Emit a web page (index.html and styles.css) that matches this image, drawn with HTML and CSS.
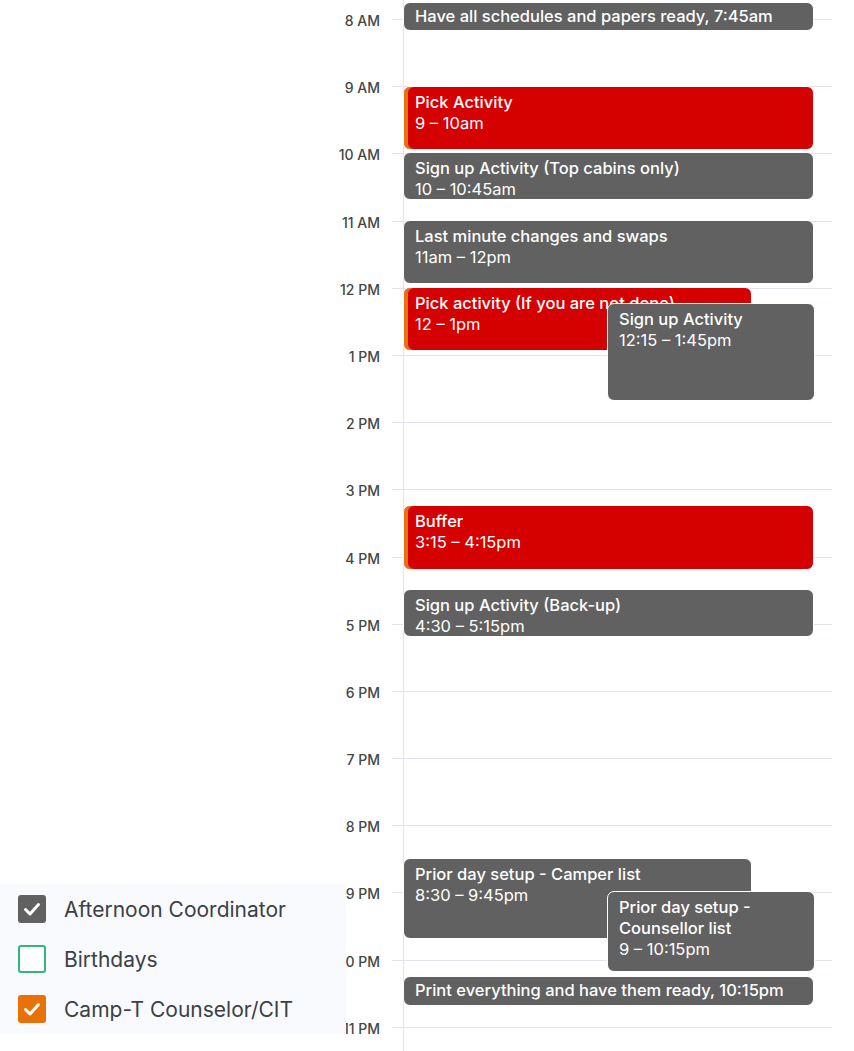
FILE: index.html
```html
<!DOCTYPE html>
<html>
<head>
<meta charset="utf-8">
<link rel="stylesheet" href="styles.css">
</head>
<body>
<div class="calendar">
  <div class="gutter">
    <div class="lead"></div>
    <div class="label"><span>8 AM</span></div>
    <div class="label"><span>9 AM</span></div>
    <div class="label"><span>10 AM</span></div>
    <div class="label"><span>11 AM</span></div>
    <div class="label"><span>12 PM</span></div>
    <div class="label"><span>1 PM</span></div>
    <div class="label"><span>2 PM</span></div>
    <div class="label"><span>3 PM</span></div>
    <div class="label"><span>4 PM</span></div>
    <div class="label"><span>5 PM</span></div>
    <div class="label"><span>6 PM</span></div>
    <div class="label"><span>7 PM</span></div>
    <div class="label"><span>8 PM</span></div>
    <div class="label"><span>9 PM</span></div>
    <div class="label"><span>10 PM</span></div>
    <div class="label"><span>11 PM</span></div>
  </div>
  <div class="grid">
    <div class="lead"></div>
    <div class="row"></div><div class="row"></div><div class="row"></div><div class="row"></div>
    <div class="row"></div><div class="row"></div><div class="row"></div><div class="row"></div>
    <div class="row"></div><div class="row"></div><div class="row"></div><div class="row"></div>
    <div class="row"></div><div class="row"></div><div class="row"></div><div class="row"></div>
    <div class="events">
      <div class="event gray short full" style="top:2px;height:29px"><span class="title">Have all schedules and papers ready, 7:45am</span></div>
      <div class="event red full" style="top:86px;height:64px"><div class="title">Pick Activity</div><div class="time">9 – 10am</div></div>
      <div class="event gray full" style="top:152px;height:48px"><div class="title">Sign up Activity (Top cabins only)</div><div class="time">10 – 10:45am</div></div>
      <div class="event gray full" style="top:220px;height:64px"><div class="title">Last minute changes and swaps</div><div class="time">11am – 12pm</div></div>
      <div class="event red left" style="top:287px;height:64px"><div class="title">Pick activity (If you are not done)</div><div class="time">12 – 1pm</div></div>
      <div class="event gray right" style="top:303px;height:98px"><div class="title">Sign up Activity</div><div class="time">12:15 – 1:45pm</div></div>
      <div class="event red full" style="top:505px;height:65px"><div class="title">Buffer</div><div class="time">3:15 – 4:15pm</div></div>
      <div class="event gray full" style="top:589px;height:48px"><div class="title">Sign up Activity (Back-up)</div><div class="time">4:30 – 5:15pm</div></div>
      <div class="event gray left" style="top:858px;height:81px"><div class="title">Prior day setup - Camper list</div><div class="time">8:30 – 9:45pm</div></div>
      <div class="event gray right" style="top:891px;height:81px"><div class="title">Prior day setup - Counsellor list</div><div class="time">9 – 10:15pm</div></div>
      <div class="event gray short full" style="top:976px;height:30px"><span class="title">Print everything and have them ready, 10:15pm</span></div>
    </div>
  </div>
</div>

<div class="calendars">
  <div class="cal">
    <span class="box box-gray"><svg viewBox="0 0 28 28" width="28" height="28"><path d="M7.5 14.5 L12 19 L20.5 9.5" fill="none" stroke="#fff" stroke-width="3" stroke-linecap="round" stroke-linejoin="round"/></svg></span>
    <span class="name">Afternoon Coordinator</span>
  </div>
  <div class="cal">
    <span class="box box-green"></span>
    <span class="name">Birthdays</span>
  </div>
  <div class="cal">
    <span class="box box-orange"><svg viewBox="0 0 28 28" width="28" height="28"><path d="M7.5 14.5 L12 19 L20.5 9.5" fill="none" stroke="#fff" stroke-width="3" stroke-linecap="round" stroke-linejoin="round"/></svg></span>
    <span class="name">Camp-T Counselor/CIT</span>
  </div>
</div>
</body>
</html>
```

FILE: styles.css
```css
html, body {
  margin: 0;
  padding: 0;
  background: #ffffff;
  overflow: hidden;
  height: 1051px;
}

body {
  font-family: Inter, Roboto, "Noto Sans", Arial, sans-serif;
  position: relative;
}

.calendar {
  display: flex;
  height: 1051px;
}

.gutter {
  width: 392px;
  flex: none;
}

.lead {
  height: 19px;
}

.label {
  height: 67.2px;
  position: relative;
}

.label span {
  position: absolute;
  right: 12px;
  top: -7px;
  font-size: 14px;
  font-weight: 500;
  color: #444746;
  line-height: 18px;
}

.grid {
  width: 440px;
  flex: none;
  position: relative;
}

.row {
  height: 67.2px;
  box-sizing: border-box;
  border-top: 1px solid #e1e5ee;
}

.events {
  position: absolute;
  top: 0;
  bottom: 0;
  left: 11px;
  right: 0;
  border-left: 1px solid #e1e5ee;
}

.event {
  position: absolute;
  box-sizing: border-box;
  border: 1px solid #ffffff;
  border-radius: 7px;
  padding: 5px 10px 0 11px;
  color: #ffffff;
  font-size: 16.5px;
  line-height: 21px;
  overflow: hidden;
}

.event.full { left: -1px; width: 411px; }
.event.left { left: -1px; width: 349px; }
.event.right { left: 203px; width: 208px; }

.event.gray { background: #616161; }
.event.red {
  background: #d50000;
  box-shadow: inset 4px 0 0 #e8710a;
}

.event.short {
  padding-top: 3px;
  white-space: nowrap;
}

.title {
  font-weight: 500;
}

.time {
  font-weight: 400;
}

.calendars {
  position: absolute;
  left: 0;
  top: 884px;
  width: 346px;
  background: #f8fafd;
  padding: 0 0 0 18px;
  box-sizing: border-box;
}

.cal {
  height: 50px;
  display: flex;
  align-items: center;
  gap: 18px;
}

.box {
  width: 28px;
  height: 28px;
  box-sizing: border-box;
  border-radius: 3px;
  flex: none;
  display: block;
}

.box svg { display: block; }

.box-gray { background: #616161; }
.box-green { border: 2px solid #33b679; background: #ffffff; }
.box-orange { background: #e8710a; }

.name {
  font-size: 21px;
  color: #3c4043;
}
```
